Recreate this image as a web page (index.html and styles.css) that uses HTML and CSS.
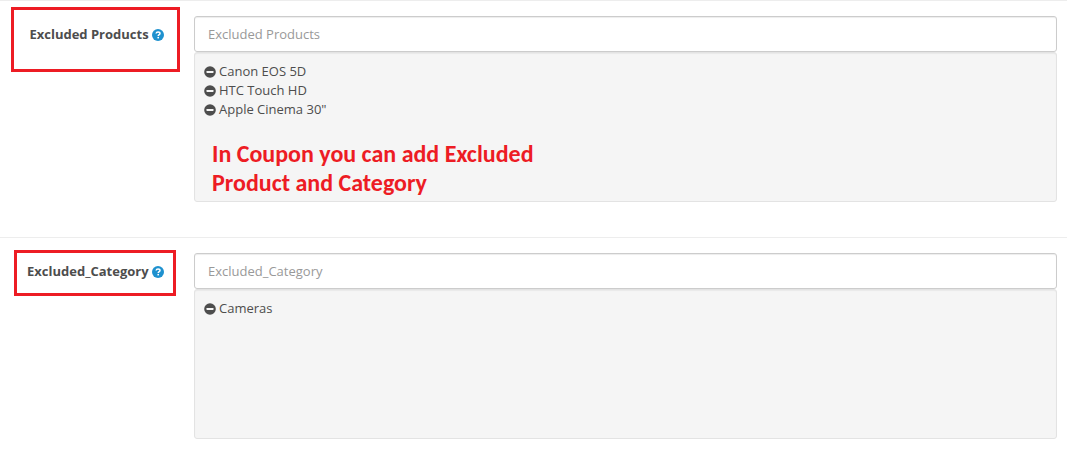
FILE: index.html
```html
<!DOCTYPE html>
<html lang="en">
<head>
<meta charset="utf-8">
<title>Coupon</title>
<link rel="stylesheet" href="styles.css">
</head>
<body>
<svg class="sprite" aria-hidden="true">
  <symbol id="minus" viewBox="0 0 12 12">
    <circle cx="6" cy="6" r="5.8" fill="currentColor"/>
    <rect x="2.5" y="5" width="7" height="2" rx=".4" fill="#f5f5f5"/>
  </symbol>
  <symbol id="help" viewBox="0 0 12 12">
    <circle cx="6" cy="6" r="6" fill="currentColor"/>
    <path d="M4.1 4.5C4.3 3.3 5 2.9 6 2.9c1.200 0 2 .6 2 1.600C8 5.700 6.200 5.600 6.200 7" fill="none" stroke="#fff" stroke-width="1.500"/>
    <rect x="5.400" y="7.900" width="1.600" height="1.500" fill="#fff"/>
  </symbol>
</svg>
<form class="form">
  <div class="group">
    <div class="label-cell">
      <label class="label" for="products">Excluded Products <svg class="help"><use href="#help"/></svg></label>
      <span class="mark mark-products"></span>
    </div>
    <div class="field">
      <input class="input" id="products" type="text" placeholder="Excluded Products">
      <div class="well">
        <ul class="list">
          <li class="item"><button class="remove" type="button" aria-label="Remove Canon EOS 5D"><svg class="minus"><use href="#minus"/></svg></button>Canon EOS 5D</li>
          <li class="item"><button class="remove" type="button" aria-label="Remove HTC Touch HD"><svg class="minus"><use href="#minus"/></svg></button>HTC Touch HD</li>
          <li class="item"><button class="remove" type="button" aria-label="Remove Apple Cinema 30&quot;"><svg class="minus"><use href="#minus"/></svg></button>Apple Cinema 30"</li>
        </ul>
        <p class="note">In Coupon you can add Excluded<br>Product and Category</p>
      </div>
    </div>
  </div>
  <div class="group">
    <div class="label-cell">
      <label class="label" for="category">Excluded_Category <svg class="help"><use href="#help"/></svg></label>
      <span class="mark mark-category"></span>
    </div>
    <div class="field">
      <input class="input" id="category" type="text" placeholder="Excluded_Category">
      <div class="well">
        <ul class="list">
          <li class="item"><button class="remove" type="button" aria-label="Remove Cameras"><svg class="minus"><use href="#minus"/></svg></button>Cameras</li>
        </ul>
      </div>
    </div>
  </div>
</form>
</body>
</html>
```
FILE: styles.css
```css
* {
  box-sizing: border-box;
}

body {
  margin: 0;
  background: #fff;
  color: #4d4d4d;
  font: 13px/19px "Open Sans", sans-serif;
}

.sprite {
  position: absolute;
  width: 0;
  height: 0;
}

.group {
  display: grid;
  grid-template-columns: 164px 1fr;
  column-gap: 30px;
  padding: 15px 10px 35px 0;
  border-top: 1px solid #ededed;
}

.label-cell {
  position: relative;
  padding-top: 9px;
  text-align: right;
}

.label {
  font-weight: 700;
  white-space: nowrap;
}

.help,
.minus {
  width: 12px;
  height: 12px;
}

.help {
  color: #1e91cf;
  vertical-align: -2px;
}

.mark {
  position: absolute;
  border: 3px solid #ed1c24;
  pointer-events: none;
}

.mark-products {
  top: -9px;
  left: 11px;
  width: 169px;
  height: 65px;
}

.mark-category {
  top: -3px;
  left: 14px;
  width: 162px;
  height: 46px;
}

.input {
  display: block;
  width: 100%;
  height: 36px;
  padding: 8px 13px;
  border: 1px solid #ccc;
  border-radius: 3px;
  background: #fff;
  box-shadow: inset 0 1px 1px rgba(0, 0, 0, 0.075);
  color: #555;
  font: inherit;
}

.input::placeholder {
  color: #999;
  opacity: 1;
}

.well {
  min-height: 150px;
  padding: 9px 9px 4px;
  border: 1px solid #e3e3e3;
  border-radius: 3px;
  background: #f5f5f5;
  box-shadow: inset 0 1px 1px rgba(0, 0, 0, 0.05);
}

.list {
  margin: 0;
  padding: 0;
  list-style: none;
}

.item {
  display: flex;
  align-items: center;
  gap: 3px;
}

.remove {
  display: flex;
  padding: 0;
  border: 0;
  background: none;
  color: inherit;
  cursor: pointer;
}

.note {
  margin: 20px 0 0 8px;
  color: #ed1c24;
  font: 700 24px/29px Calibri, Carlito, Lato, sans-serif;
}
```
